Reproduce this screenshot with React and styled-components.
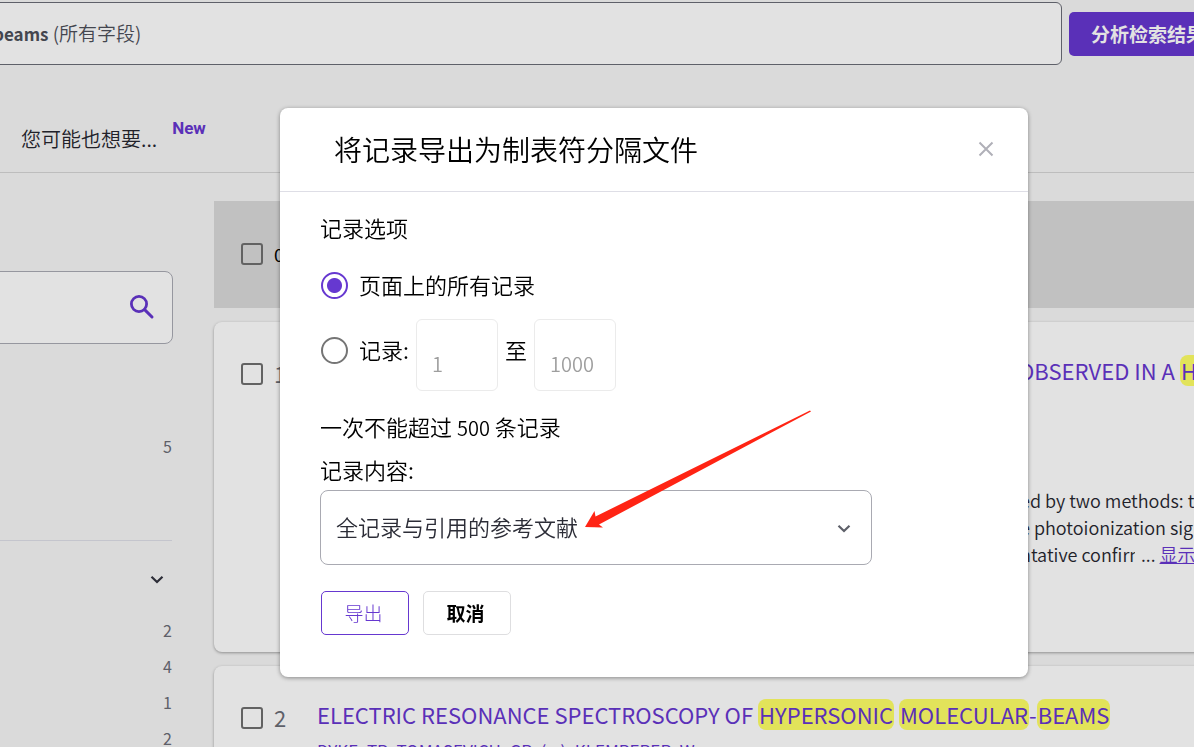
import React from "react";
import styled, { createGlobalStyle, css } from "styled-components";

const GlobalStyle = createGlobalStyle`
  *, *::before, *::after { box-sizing: border-box; }
  body {
    margin: 0;
    background: #dadada;
    color: #212129;
    font-family: "Noto Sans CJK SC", "Noto Sans", sans-serif;
    font-weight: 350;
    overflow: hidden;
  }
  h1, h2, p, ul { margin: 0; padding: 0; font-weight: inherit; }
  button, input, select { font: inherit; color: inherit; }
`;

const Page = styled.div`
  height: 100vh;
  overflow: hidden;
`;

const Header = styled.header`
  border-bottom: 1px solid #bdbdbd;
  padding-top: 2px;
`;

const SearchRow = styled.div`
  display: flex;
  align-items: flex-start;
  gap: 7px;
  margin: 0 -33px 0 -16px;
`;

const Query = styled.div`
  flex: 1;
  height: 63px;
  padding: 0 8px;
  border: 1px solid #5e6069;
  border-radius: 6px;
  background: #e2e2e2;
  color: #44464f;
  font-size: 19px;
  line-height: 60px;
  white-space: nowrap;
  b { font-size: 17px; font-weight: 700; }
`;

const AnalyzeButton = styled.button`
  height: 44px;
  margin-top: 10px;
  padding: 0 22px 2px;
  border: 0;
  border-radius: 5px;
  background: #5a30b8;
  color: #e2e2e2;
  font-size: 19px;
  font-weight: 700;
  white-space: nowrap;
`;

const Suggest = styled.div`
  display: flex;
  align-items: flex-start;
  gap: 15px;
  height: 107px;
  padding: 52px 0 0 21px;
  font-size: 20px;
  line-height: 44px;
`;

const NewTag = styled.span`
  color: #5a30b8;
  font-family: Roboto, sans-serif;
  font-size: 17px;
  font-weight: 700;
  line-height: 22px;
`;

const Body = styled.div`
  display: grid;
  grid-template-columns: 172px minmax(0, 1fr);
  column-gap: 42px;
`;

const Sidebar = styled.aside`
  padding-top: 98px;
  color: #5e6069;
  font-size: 16px;
  font-weight: 400;
`;

const SearchBox = styled.div`
  display: flex;
  align-items: center;
  height: 73px;
  margin: 0 -1px 0 -10px;
  padding: 0 17px 2px 0;
  border: 1px solid #96979f;
  border-radius: 8px;
  background: #e2e2e2;
`;

const SearchInput = styled.input`
  flex: 1;
  min-width: 0;
  border: 0;
  background: transparent;
  outline: 0;
`;

const IconButton = styled.button`
  display: flex;
  padding: 0;
  border: 0;
  background: transparent;
  color: ${(p) => p.$color};
`;

const Counts = styled.ul`
  list-style: none;
  text-align: right;
  line-height: 36px;
  padding-top: ${(p) => p.$top}px;
`;

const FacetHead = styled.div`
  display: flex;
  align-items: flex-start;
  justify-content: flex-end;
  height: 72px;
  margin-top: 76px;
  padding: 28px 5px 0 0;
  border-top: 1px solid #c4c5cd;
`;

const Results = styled.main`
  padding-top: 28px;
  margin-right: -20px;
`;

const Toolbar = styled.div`
  display: flex;
  align-items: center;
  gap: 11px;
  height: 107px;
  padding: 0 0 2px 27px;
  background: #c1c1c1;
  color: #000;
  font-size: 18px;
  font-weight: 400;
`;

const Check = styled.input.attrs({ type: "checkbox" })`
  appearance: none;
  flex: none;
  width: 22px;
  height: 22px;
  margin: 0;
  border: 2px solid #626262;
  border-radius: 3px;
`;

const Card = styled.article`
  display: flex;
  align-items: flex-start;
  gap: 11px;
  height: ${(p) => p.$height}px;
  margin-top: 14px;
  padding: 31px 0 0 27px;
  border-radius: 8px;
  background: #e2e2e2;
  box-shadow: 0 1px 3px rgba(0, 0, 0, 0.35);
  overflow: hidden;
`;

const Pick = styled.label`
  display: flex;
  flex: none;
  align-items: center;
  gap: 11px;
  width: 65px;
  height: 42px;
  color: #5e6069;
  font-size: 22px;
  line-height: 28px;
  font-weight: 400;
  span { padding-bottom: 2px; }
`;

const Entry = styled.div`
  flex: 1;
  min-width: 0;
  padding-left: ${(p) => p.$indent || 0}px;
  font-weight: 400;
  white-space: nowrap;
`;

const Title = styled.h2`
  color: #5a30b8;
  font-size: 22px;
  line-height: 34px;
`;

const TitleLink = styled.a`
  color: inherit;
  text-decoration: none;
`;

const Mark = styled.mark`
  padding: 0 1px;
  border-radius: 8px;
  background: #e2e35a;
  color: inherit;
  display: inline-block;
  line-height: 31px;
`;

const Authors = styled.p`
  padding-top: 8px;
  color: #5a30b8;
  font-size: 17px;
  line-height: 24px;
`;

const Abstract = styled.p`
  padding: 100px 0 0 2px;
  font-size: 18px;
  font-weight: 350;
  line-height: 27px;
`;

const Clip = styled.span`
  display: inline-block;
  width: 115px;
  margin-right: 2px;
  overflow: hidden;
  vertical-align: bottom;
`;

const MoreLink = styled.a`
  color: #5a30b8;
`;

const Overlay = styled.div`
  position: fixed;
  inset: 0;
  display: flex;
  align-items: flex-start;
  padding: 108px 166px 0 280px;
`;

const Dialog = styled.section`
  position: relative;
  flex: 1;
  min-width: 0;
  padding-bottom: 42px;
  border-radius: 8px;
  background: #fff;
  color: #000;
  font-size: 22px;
  line-height: 28px;
  box-shadow: 0 1px 4px rgba(0, 0, 0, 0.4);
`;

const DialogHead = styled.header`
  display: flex;
  align-items: center;
  justify-content: space-between;
  height: 84px;
  padding: 0 34px 2px 54px;
  border-bottom: 1px solid #dedee6;
`;

const DialogTitle = styled.h1`
  font-size: 28px;
  line-height: 40px;
`;

const Form = styled.form`
  display: flex;
  flex-direction: column;
  align-items: flex-start;
  padding: 21px 40px 0;
`;

const Line = styled.div`
  display: flex;
  align-items: center;
  margin-top: ${(p) => p.$gap || 0}px;
`;

const Limit = styled.p`
  margin-top: 21px;
`;

const LimitCount = styled.span`
  font-size: 20px;
  line-height: 20px;
`;

const Choice = styled.label`
  display: flex;
  align-items: center;
  gap: 11px;
  padding-left: 1px;
  padding-bottom: ${(p) => (p.$raised ? 10 : 0)}px;
`;

const ChoiceText = styled.span`
  padding-bottom: 2px;
`;

const RangeWord = styled.span`
  padding-bottom: 12px;
`;

const Radio = styled.input.attrs({ type: "radio" })`
  appearance: none;
  flex: none;
  width: 27px;
  height: 27px;
  margin: 0;
  border: 2px solid #757575;
  border-radius: 50%;
  &:checked {
    border-color: #6638d0;
    background: radial-gradient(circle, #6638d0 7px, transparent 8px);
  }
`;

const RangeInput = styled.input`
  width: 82px;
  height: 72px;
  margin: 0 7px;
  padding: 17px 15px 0;
  border: 1px solid #ebebeb;
  border-radius: 6px;
  background: #fff;
  color: #9e9e9e;
  font-size: 20px;
`;

const SelectWrap = styled.div`
  position: relative;
  align-self: stretch;
  margin: 7px 116px 0 0;
  color: #5e6069;
  svg {
    position: absolute;
    top: 28px;
    right: 18px;
    pointer-events: none;
  }
`;

const Select = styled.select`
  appearance: none;
  display: block;
  width: 100%;
  height: 75px;
  padding: 0 15px 3px;
  border: 1px solid #a9aab2;
  border-radius: 8px;
  background: #fff;
  color: #2c2d37;
`;

const Actions = styled.div`
  display: flex;
  gap: 14px;
  padding: 26px 0 0 1px;
`;

const Button = styled.button`
  width: 88px;
  height: 44px;
  padding: 0 3px 1px 0;
  border: 1px solid #dedee0;
  border-radius: 5px;
  background: #fff;
  color: #000;
  font-size: 19px;
  font-weight: 700;
  ${(p) =>
    p.$outline &&
    css`
      border-color: #6638d0;
      color: #6638d0;
      font-weight: 300;
    `}
`;

const Arrow = styled.svg`
  position: absolute;
  left: 304px;
  top: 301px;
  pointer-events: none;
`;

const Chevron = ({ color }) => (
  <svg width="20" height="20" viewBox="0 0 20 20" fill="none" stroke={color} strokeWidth="2.2" aria-hidden="true">
    <path d="M4.5 7.7 L10 13 L15.5 7.7" />
  </svg>
);

const SearchIcon = () => (
  <svg width="28" height="28" viewBox="0 0 28 28" fill="none" stroke="currentColor" aria-hidden="true">
    <circle cx="12" cy="11" r="7.6" strokeWidth="2.8" />
    <path d="M17.6 16.6 L25 24" strokeWidth="3" strokeLinecap="round" />
  </svg>
);

const CloseIcon = () => (
  <svg width="16" height="16" viewBox="0 0 16 16" fill="none" stroke="currentColor" strokeWidth="2" aria-hidden="true">
    <path d="M1.5 1.5 L14.5 14.5 M14.5 1.5 L1.5 14.5" />
  </svg>
);

export default function App() {
  return (
    <>
      <GlobalStyle />
      <Page>
        <Header>
          <SearchRow>
            <Query>
              <b>beams</b> (所有字段)
            </Query>
            <AnalyzeButton type="button">分析检索结果</AnalyzeButton>
          </SearchRow>
          <Suggest>
            <span>您可能也想要...</span>
            <NewTag>New</NewTag>
          </Suggest>
        </Header>
        <Body>
          <Sidebar>
            <SearchBox>
              <SearchInput aria-label="检索" />
              <IconButton type="button" $color="#5a30b8" aria-label="检索">
                <SearchIcon />
              </IconButton>
            </SearchBox>
            <Counts $top={84}>
              <li>5</li>
            </Counts>
            <FacetHead>
              <IconButton type="button" $color="#2c2d37" aria-label="展开">
                <Chevron color="currentColor" />
              </IconButton>
            </FacetHead>
            <Counts $top={0}>
              <li>2</li>
              <li>4</li>
              <li>1</li>
              <li>2</li>
            </Counts>
          </Sidebar>
          <Results>
            <Toolbar>
              <Check id="all" />
              <label htmlFor="all">0</label>
            </Toolbar>
            <Card $height={330}>
              <Pick>
                <Check />
                <span>1</span>
              </Pick>
              <Entry $indent={701}>
                <Title>
                  <TitleLink href="#record-1">
                    OBSERVED IN A <Mark>HYPERSONIC</Mark>
                  </TitleLink>
                </Title>
                <Abstract>
                  ed by two methods: time
                  <br />e photoionization signal
                  <br />
                  <Clip>ntative confirm</Clip> ... <MoreLink href="#more">显示更多</MoreLink>
                </Abstract>
              </Entry>
            </Card>
            <Card $height={200}>
              <Pick>
                <Check />
                <span>2</span>
              </Pick>
              <Entry>
                <Title>
                  <TitleLink href="#record-2">
                    ELECTRIC RESONANCE SPECTROSCOPY OF <Mark>HYPERSONIC</Mark> <Mark>MOLECULAR</Mark>-<Mark>BEAMS</Mark>
                  </TitleLink>
                </Title>
                <Authors>DYKE, TR; TOMASEVICH, GR; (...); KLEMPERER, W</Authors>
              </Entry>
            </Card>
          </Results>
        </Body>
      </Page>
      <Overlay>
        <Dialog role="dialog" aria-modal="true" aria-labelledby="dialog-title">
          <DialogHead>
            <DialogTitle id="dialog-title">将记录导出为制表符分隔文件</DialogTitle>
            <IconButton type="button" $color="#b0b0b8" aria-label="关闭">
              <CloseIcon />
            </IconButton>
          </DialogHead>
          <Form>
            <Line>记录选项</Line>
            <Line $gap={29}>
              <Choice>
                <Radio name="range" defaultChecked />
                <ChoiceText>页面上的所有记录</ChoiceText>
              </Choice>
            </Line>
            <Line $gap={19}>
              <Choice $raised>
                <Radio name="range" />
                <ChoiceText>记录:</ChoiceText>
              </Choice>
              <RangeInput aria-label="起始记录" defaultValue="1" disabled />
              <RangeWord>至</RangeWord>
              <RangeInput aria-label="结束记录" defaultValue="1000" disabled />
            </Line>
            <Limit>
              一次不能超过 <LimitCount>500</LimitCount> 条记录
            </Limit>
            <Line as="label" htmlFor="content" $gap={15}>
              记录内容:
            </Line>
            <SelectWrap>
              <Select id="content">
                <option>全记录与引用的参考文献</option>
              </Select>
              <Chevron color="currentColor" />
            </SelectWrap>
            <Actions>
              <Button type="button" $outline>
                导出
              </Button>
              <Button type="button">取消</Button>
            </Actions>
          </Form>
          <Arrow width="230" height="120" viewBox="584 409 230 120" aria-hidden="true">
            <path
              d="M585 527 L594.5 511 L595.5 516.5 L810 410.5 L811 411.5 L599 524.5 L603 527.6 Z"
              fill="#ff2414"
            />
          </Arrow>
        </Dialog>
      </Overlay>
    </>
  );
}
